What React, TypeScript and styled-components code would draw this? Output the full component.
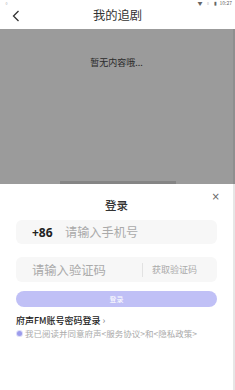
import React from "react";
import styled, { createGlobalStyle } from "styled-components";

const Global = createGlobalStyle`
  html, body { margin: 0; padding: 0; background: #fff; }
  body { font-family: "Noto Sans CJK SC", "Noto Sans", sans-serif; }
  * { box-sizing: border-box; }
`;

const Page = styled.div`
  width: 235px;
  height: 390px;
  display: flex;
  flex-direction: column;
  overflow: hidden;
  background: #fff;
`;

const StatusBar = styled.div`
  height: 6px;
  padding: 0 3px 0 4px;
  display: flex;
  align-items: flex-start;
  justify-content: space-between;
  font-size: 5px;
  line-height: 6px;
  color: #666;
`;

const StatusRight = styled.div`
  display: flex;
  align-items: center;
  gap: 3px;
`;

const NavBar = styled.div`
  height: 23px;
  padding: 0 10px 4px 12px;
  display: flex;
  align-items: center;
  position: relative;
`;

const NavTitle = styled.div`
  position: absolute;
  left: 0;
  right: 0;
  top: 0;
  height: 18px;
  text-align: center;
  font-size: 12.3px;
  line-height: 18px;
  color: #333;
`;

const Overlay = styled.div`
  height: 155px;
  background: #9b9b9b;
  display: flex;
  flex-direction: column;
  align-items: center;
  justify-content: space-between;
  padding-top: 28px;
  border-right: 2px solid #8f8f8f;
`;

const EmptyText = styled.div`
  font-size: 9px;
  line-height: 12px;
  color: #2a2a2a;
`;

const Shade = styled.div`
  width: 116px;
  height: 3px;
  background: #858585;
  margin-left: 2px;
`;

const Sheet = styled.div`
  flex: 1;
  position: relative;
  padding: 13px 16px 0 16px;
  display: flex;
  flex-direction: column;
  border-right: 2px solid #e6e6e6;
`;

const SheetTitle = styled.div`
  text-align: center;
  font-size: 11.5px;
  line-height: 16px;
  font-weight: 500;
  color: #333;
`;

const Close = styled.div`
  position: absolute;
  right: 13px;
  top: 7px;
  font-size: 10px;
  line-height: 12px;
  color: #666;
  font-family: "DejaVu Sans", sans-serif;
`;

const InputBox = styled.div<{ $top: number; $h: number }>`
  margin-top: ${(p) => p.$top}px;
  height: ${(p) => p.$h}px;
  background: #f7f7f7;
  border-radius: 6px;
  display: flex;
  align-items: center;
  padding-left: 16px;
  padding-right: 20px;
`;

const Prefix = styled.span`
  font-size: 12px;
  font-weight: 700;
  color: #222;
  width: 33px;
  font-family: "Noto Sans", sans-serif;
`;

const Placeholder = styled.span<{ $size: number }>`
  font-size: ${(p) => p.$size}px;
  color: #aaa;
  flex: 1;
`;

const Divider = styled.span`
  width: 1px;
  height: 14px;
  background: #e2e2e2;
  margin-right: 9px;
`;

const CodeLink = styled.span`
  font-size: 9px;
  color: #aaa;
`;

const LoginButton = styled.div`
  margin-top: 9px;
  height: 16px;
  border-radius: 8px;
  background: #c0c0f6;
  color: #fff;
  font-size: 7px;
  display: flex;
  align-items: center;
  justify-content: center;
`;

const AccountLink = styled.div`
  margin-top: 8px;
  font-size: 9px;
  line-height: 12px;
  font-weight: 500;
  color: #222;
  display: flex;
  align-items: center;
  gap: 2px;
`;

const Arrow = styled.span`
  color: #888;
`;

const Agreement = styled.div`
  margin-top: 1px;
  display: flex;
  align-items: center;
  gap: 3px;
  font-size: 8.5px;
  line-height: 11px;
  color: #aaa;
  padding-left: 1px;
`;

const Radio = styled.span`
  width: 5px;
  height: 5px;
  border-radius: 50%;
  background: #9c9cec;
  box-shadow: 0 0 0 1px #dcdcf8;
  flex-shrink: 0;
`;

export default function App() {
  return (
    <>
      <Global />
      <Page>
        <StatusBar>
          <span>▫</span>
          <StatusRight>
            <span>▼</span>
            <span>▫</span>
            <span>▮</span>
            <span>10:27</span>
          </StatusRight>
        </StatusBar>
        <NavBar>
          <svg width="8" height="12" viewBox="0 0 8 12">
            <path d="M6.5 1 L1.5 6 L6.5 11" fill="none" stroke="#333" strokeWidth="1.3" />
          </svg>
          <NavTitle>我的追剧</NavTitle>
        </NavBar>
        <Overlay>
          <EmptyText>暂无内容哦...</EmptyText>
          <Shade />
        </Overlay>
        <Sheet>
          <SheetTitle>登录</SheetTitle>
          <Close>×</Close>
          <InputBox $top={7} $h={24}>
            <Prefix>+86</Prefix>
            <Placeholder $size={12.2}>请输入手机号</Placeholder>
          </InputBox>
          <InputBox $top={13} $h={25}>
            <Placeholder $size={12.3}>请输入验证码</Placeholder>
            <Divider />
            <CodeLink>获取验证码</CodeLink>
          </InputBox>
          <LoginButton>登录</LoginButton>
          <AccountLink>
            府声FM账号密码登录<Arrow>›</Arrow>
          </AccountLink>
          <Agreement>
            <Radio />
            我已阅读并同意府声&lt;服务协议&gt;和&lt;隐私政策&gt;
          </Agreement>
        </Sheet>
      </Page>
    </>
  );
}
